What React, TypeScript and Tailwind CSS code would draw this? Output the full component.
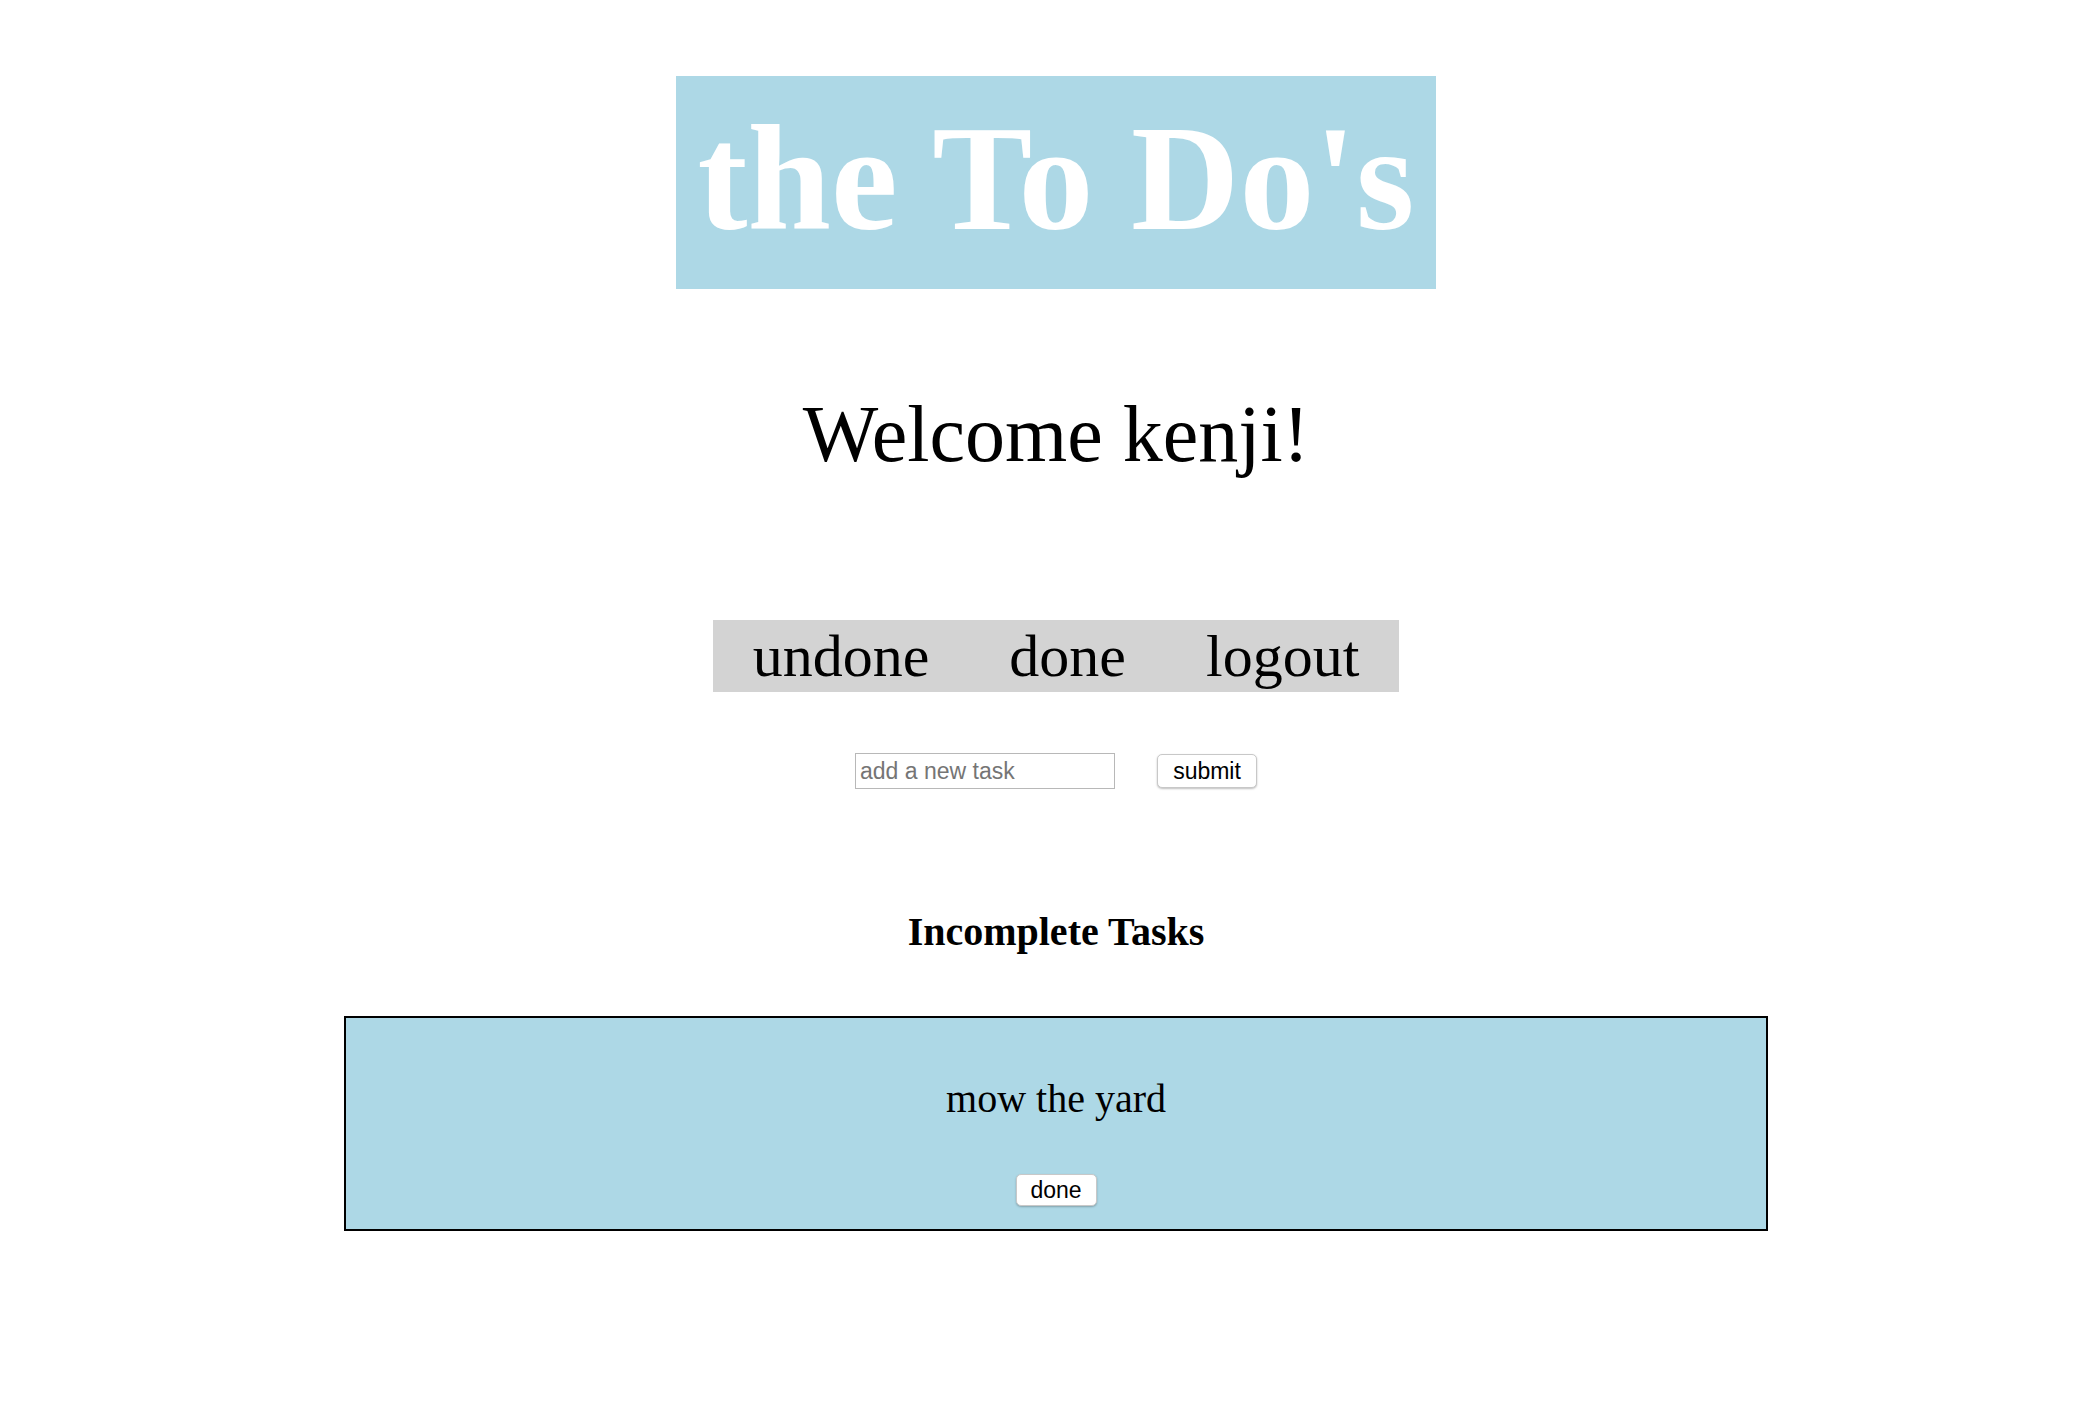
import React from "react";

export default function App() {
  return (
    <div className="min-h-[1408px] w-full bg-white pl-[16px] flex flex-col items-center" style={{ fontFamily: '"Liberation Serif", "Times New Roman", serif' }}>
      <div className="mt-[76px] h-[213px] w-[760px] bg-[#add8e6] flex items-center justify-center pb-[8px]">
        <h1 className="text-[150px] font-bold text-white leading-normal whitespace-nowrap">the To Do's</h1>
      </div>

      <h2 className="mt-[85px] text-[80px] leading-normal text-black whitespace-nowrap">Welcome kenji!</h2>

      <nav className="mt-[126px] h-[72px] bg-[#d3d3d3] flex items-center">
        <a className="px-[40px] text-[60px] leading-[72px] text-black cursor-pointer">undone</a>
        <a className="px-[40px] text-[60px] leading-[72px] text-black cursor-pointer">done</a>
        <a className="px-[40px] text-[60px] leading-[72px] text-black cursor-pointer">logout</a>
      </nav>

      <div className="mt-[61px] flex items-center gap-[42px]">
        <input
          type="text"
          placeholder="add a new task"
          className="w-[260px] h-[36px] border border-[#b8b8b8] bg-white pl-[4px] text-[23px] text-black placeholder:text-[#757575] outline-none"
          style={{ fontFamily: '"Liberation Sans", Arial, sans-serif' }}
        />
        <button
          className="w-[100px] h-[34px] rounded-[5px] border border-[#c8c8c8] bg-white text-[23px] text-black shadow-[0_1px_2px_rgba(0,0,0,0.25)] flex items-center justify-center"
          style={{ fontFamily: '"Liberation Sans", Arial, sans-serif' }}
        >
          submit
        </button>
      </div>

      <h3 className="mt-[120px] text-[40px] font-bold leading-[46px] text-black whitespace-nowrap">Incomplete Tasks</h3>

      <div className="mt-[61px] w-[1424px] h-[215px] border-2 border-black bg-[#add8e6] flex flex-col items-center pt-[58px]">
        <p className="text-[40px] leading-[46px] text-black whitespace-nowrap">mow the yard</p>
        <button
          className="mt-[52px] w-[81px] h-[32px] rounded-[5px] border border-[#c8c8c8] bg-white text-[23px] text-black shadow-[0_1px_2px_rgba(0,0,0,0.25)] flex items-center justify-center"
          style={{ fontFamily: '"Liberation Sans", Arial, sans-serif' }}
        >
          done
        </button>
      </div>
    </div>
  );
}
